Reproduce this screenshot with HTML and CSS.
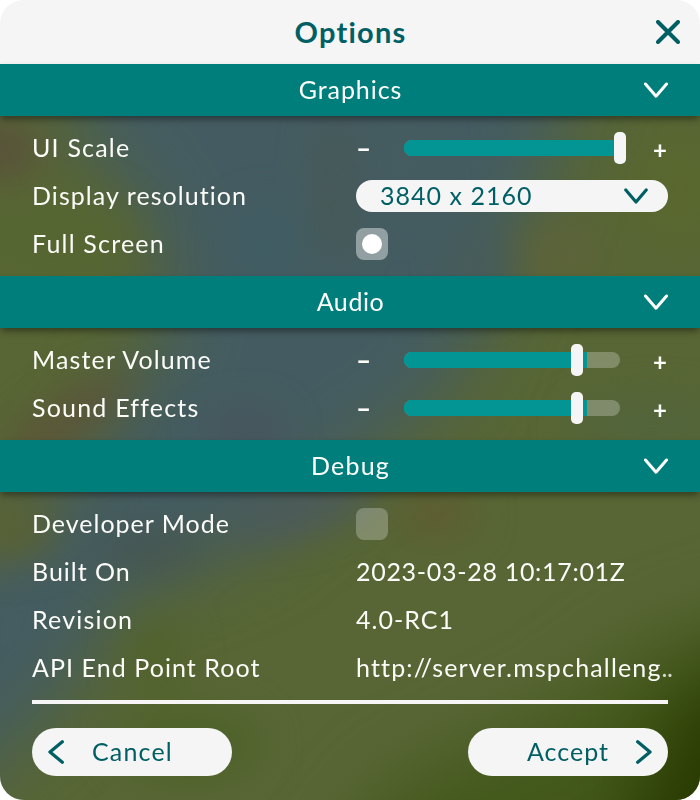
FILE: index.html
```
<!DOCTYPE html>
<html lang="en">
<head>
<meta charset="utf-8">
<title>Options</title>
<link rel="stylesheet" href="styles.css">
</head>
<body>
<main class="window">
  <svg class="backdrop" viewBox="0 64 700 736" preserveAspectRatio="none" aria-hidden="true">
    <defs>
      <filter id="soft" x="-20%" y="-20%" width="140%" height="140%" color-interpolation-filters="sRGB"><feGaussianBlur stdDeviation="20"/></filter>
      <filter id="softer" x="-30%" y="-30%" width="160%" height="160%" color-interpolation-filters="sRGB"><feGaussianBlur stdDeviation="38"/></filter>
    </defs>
    <rect y="64" width="700" height="736" fill="#586635"/>
    <path filter="url(#softer)" d="M30 0H610L520 240L445 400L330 480L250 545L130 590L70 690L-80 830V590L50 500L110 420L170 320L150 220L90 150Z" fill="#445c61"/>
    <g filter="url(#soft)">
      <ellipse cx="-5" cy="150" rx="45" ry="26" fill="#5a4f3b"/>
      <ellipse cx="55" cy="240" rx="80" ry="45" fill="#566632"/>
      <ellipse cx="268" cy="245" rx="35" ry="35" fill="#3f5d63"/>
      <ellipse cx="335" cy="190" rx="14" ry="80" fill="#4a5753"/>
      <ellipse cx="400" cy="160" rx="25" ry="60" fill="#455c60"/>
      <ellipse cx="65" cy="420" rx="75" ry="16" transform="rotate(-32 65 420)" fill="#5e5038"/>
      <ellipse cx="245" cy="430" rx="35" ry="16" fill="#4a515b"/>
      <ellipse cx="10" cy="530" rx="45" ry="28" fill="#5a6232"/>
      <ellipse cx="150" cy="550" rx="50" ry="14" fill="#46524e"/>
      <ellipse cx="300" cy="510" rx="75" ry="18" transform="rotate(-15 300 510)" fill="#4b5860"/>
      <ellipse cx="435" cy="515" rx="40" ry="18" fill="#605a30"/>
      <ellipse cx="560" cy="255" rx="40" ry="32" fill="#5e633a"/>
      <ellipse cx="480" cy="265" rx="25" ry="40" fill="#475b5c"/>
      <ellipse cx="680" cy="190" rx="45" ry="55" fill="#59682f"/>
      <ellipse cx="650" cy="425" rx="80" ry="22" fill="#51643d"/>
      <ellipse cx="155" cy="655" rx="25" ry="35" fill="#50622a"/>
      <ellipse cx="190" cy="745" rx="70" ry="35" fill="#4e6229"/>
    </g>
    <g filter="url(#softer)">
      <path d="M300 920L390 790L560 710L640 650L820 590V920Z" fill="#43581b"/>
      <path d="M590 920L655 760L690 690L820 630V920Z" fill="#293a00"/>
    </g>
  </svg>

  <header class="titlebar">
    <h1 class="title">Options</h1>
    <svg class="close" viewBox="0 0 24 24"><path d="M2 2L22 22M22 2L2 22"/></svg>
  </header>

  <section>
    <h2 class="bar"><span class="t-graphics">Graphics</span><svg class="chevron" viewBox="0 0 24 16"><path d="M1.5 2L12 14.2L22.5 2"/></svg></h2>
    <div class="rows">
      <div class="row"><span class="label t-wide">UI Scale</span>
        <div class="control stepper"><span class="minus">-</span><div class="track"><div class="fill full"></div><div class="thumb thumb-full"></div></div><span class="plus">+</span></div></div>
      <div class="row"><span class="label t-normal">Display resolution</span>
        <div class="control select"><span>3840 x 2160</span><svg class="chevron" viewBox="0 0 24 16"><path d="M1.8 2L12 14L22.2 2"/></svg></div></div>
      <div class="row"><span class="label t-wide">Full Screen</span><div class="checkbox checked"></div></div>
    </div>
  </section>

  <section>
    <h2 class="bar"><span class="t-audio">Audio</span><svg class="chevron" viewBox="0 0 24 16"><path d="M1.5 2L12 14.2L22.5 2"/></svg></h2>
    <div class="rows">
      <div class="row"><span class="label t-volume">Master Volume</span>
        <div class="control stepper"><span class="minus">-</span><div class="track"><div class="fill"></div><div class="thumb"></div></div><span class="plus">+</span></div></div>
      <div class="row"><span class="label t-wide">Sound Effects</span>
        <div class="control stepper"><span class="minus">-</span><div class="track"><div class="fill"></div><div class="thumb"></div></div><span class="plus">+</span></div></div>
    </div>
  </section>

  <section>
    <h2 class="bar"><span class="t-wide">Debug</span><svg class="chevron" viewBox="0 0 24 16"><path d="M1.5 2L12 14.2L22.5 2"/></svg></h2>
    <div class="rows">
      <div class="row"><span class="label t-tight">Developer Mode</span><div class="checkbox"></div></div>
      <div class="row"><span class="label t-tight">Built On</span><span class="value t-digits">2023-03-28 10:17:01Z</span></div>
      <div class="row"><span class="label t-wide">Revision</span><span class="value t-version">4.0-RC1</span></div>
      <div class="row"><span class="label t-normal">API End Point Root</span><span class="value t-url">http://server.mspchalleng<span class="dots">..</span></span></div>
    </div>
  </section>

  <footer class="footer">
    <div class="button cancel"><svg class="arrow" viewBox="0 0 16 24"><path d="M14.3 1.8L2 12L14.3 22.2"/></svg><span>Cancel</span></div>
    <div class="button accept"><span>Accept</span><svg class="arrow" viewBox="0 0 16 24"><path d="M1.7 1.8L14 12L1.7 22.2"/></svg></div>
  </footer>
</main>
</body>
</html>
```
FILE: styles.css
```
* { box-sizing: border-box; }
body { margin: 0; background: #fff; }

.window {
  position: relative;
  isolation: isolate;
  width: 700px;
  height: 800px;
  border-radius: 24px;
  overflow: hidden;
  color: #fbfbf8;
  font: 25px/32px Lato, "Open Sans", sans-serif;
  white-space: nowrap;
}
.backdrop { position: absolute; left: 0; bottom: 0; z-index: -1; width: 700px; height: 736px; }
svg path { stroke-linecap: round; stroke-linejoin: round; }
svg.close, .chevron, .arrow { fill: none; stroke: currentColor; flex: none; }

.titlebar {
  display: grid;
  grid-template-columns: 1fr auto 1fr;
  align-items: center;
  height: 64px;
  padding: 0 20px;
  background: #f5f5f5;
  color: #005f64;
}
.title { grid-column: 2; margin: 0; padding-left: 1px; font-size: 29px; line-height: 64px; font-weight: 700; letter-spacing: 1.2px; }
.close { width: 24px; height: 24px; justify-self: end; stroke-width: 4; }

.bar {
  display: grid;
  grid-template-columns: 1fr auto 1fr;
  align-items: center;
  height: 52px;
  margin: 0;
  padding: 0 32px;
  background: #007e7b;
  box-shadow: 0 4px 7px -1px rgba(0, 0, 0, .42);
  color: #fff;
  font-size: 25px;
  font-weight: 400;
}
.bar span { grid-column: 2; padding: 0 0 2px 1px; }
.bar .chevron { justify-self: end; }
.chevron { width: 24px; height: 16px; stroke-width: 3; }

.rows { padding: 8px 32px; }
.row { display: flex; align-items: center; height: 48px; }
.label { width: 324px; flex: none; }
.label, .value, .select span, .button span { padding-bottom: 2px; }
.control { width: 312px; height: 32px; }

.stepper { display: flex; align-items: center; }
.minus, .plus { font-weight: 700; font-size: 24px; }
.minus { width: 48px; transform: scaleX(1.7); transform-origin: 0 50%; }
.plus { width: 47px; padding-top: 4px; text-align: right; }
.track { position: relative; flex: none; width: 216px; height: 16px; border-radius: 8px; background: rgba(255, 255, 255, .25); }
.fill {
  width: 183px;
  height: 16px;
  background: #039594;
  clip-path: polygon(5px 0, 100% 0, 100% 100%, 5px 100%, 0 11px, 0 5px);
}
.fill.full { width: 216px; }
.thumb { position: absolute; left: 167px; top: -8px; width: 12px; height: 32px; border-radius: 5px; background: #f5f5f5; }
.thumb-full { left: 210px; }

.select {
  display: flex;
  align-items: center;
  justify-content: space-between;
  padding: 0 20px 0 24px;
  border-radius: 16px;
  background: #f5f5f5;
  color: #005f64;
  letter-spacing: 1.02px;
}
.select .chevron { stroke-width: 3.2; }

.checkbox { display: grid; place-items: center; width: 32px; height: 32px; border-radius: 8px; background: rgba(255, 255, 255, .25); }
.checkbox.checked { background: rgba(255, 255, 255, .42); }
.checkbox.checked::after { content: ""; width: 20px; height: 20px; border-radius: 50%; background: #fff; }

.t-wide { letter-spacing: 1.2px; }
.t-normal { letter-spacing: 1.06px; }
.t-volume { letter-spacing: 1.14px; }
.t-tight { letter-spacing: 1px; }
.t-graphics { letter-spacing: .95px; }
.t-audio { letter-spacing: .6px; }
.t-digits { letter-spacing: .7px; }
.t-version { letter-spacing: 1px; }
.t-url { letter-spacing: 1.16px; }
.dots { letter-spacing: -.5px; opacity: .8; }

.footer {
  display: flex;
  justify-content: space-between;
  height: 100px;
  margin: 0 32px;
  padding-top: 24px;
  border-top: 4px solid #f7f5f5;
}
.button {
  display: flex;
  align-items: center;
  width: 200px;
  height: 48px;
  border-radius: 24px;
  background: #f5f5f5;
  color: #005f64;
}
.cancel { padding-left: 16px; gap: 28px; letter-spacing: 1.15px; }
.accept { justify-content: flex-end; padding-right: 16px; gap: 27px; letter-spacing: 1px; }
.arrow { width: 16px; height: 24px; stroke-width: 3.3; }
```
